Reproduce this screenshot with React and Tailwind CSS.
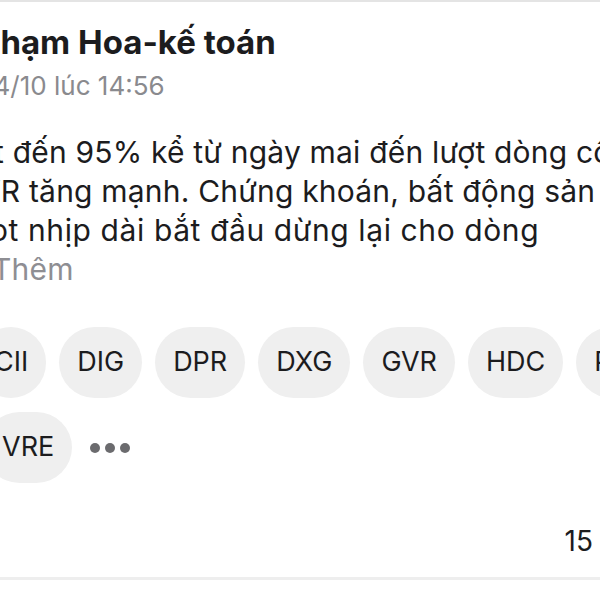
const tickers = ["CII", "DIG", "DPR", "DXG", "GVR", "HDC", "PDR"];

function Chip({ label }) {
  return (
    <div className="h-[71px] px-[18px] rounded-full bg-[#efefef] flex items-center justify-center text-[27px] text-[#1c1c1e] whitespace-nowrap shrink-0">
      {label}
    </div>
  );
}

export default function App() {
  return (
    <div
      className="w-[600px] h-[600px] overflow-hidden bg-white relative"
      style={{ fontFamily: "Inter, 'Noto Sans', sans-serif" }}
    >
      <div className="border-t-2 border-[#e4e4e4]" />
      <div className="mt-[21px] -ml-[21px] text-[33px] leading-[38px] font-bold text-[#1c1c1e] whitespace-nowrap">
        Phạm Hoa-kế toán
      </div>
      <div className="mt-[10px] -ml-[17px] text-[26px] leading-[30px] text-[#8a8a8e] whitespace-nowrap">
        14/10 lúc 14:56
      </div>

      <div className="mt-[32px] text-[30px] leading-[39px] tracking-[0.2px] text-[#1c1c1e] whitespace-nowrap">
        <div className="-ml-[6px]">t đến 95% kể từ ngày mai đến lượt dòng cổ</div>
        <div className="-ml-[42px]">GVR tăng mạnh. Chứng khoán, bất động sản</div>
        <div className="-ml-[10px] tracking-[0.6px]">ot nhịp dài bắt đầu dừng lại cho dòng</div>
        <div className="-ml-[8px] text-[#8e8e93]">Thêm</div>
      </div>

      <div className="mt-[38px] -ml-[24px] flex gap-[13px]">
        {tickers.map((t) => (
          <Chip key={t} label={t} />
        ))}
      </div>
      <div className="mt-[14px] -ml-[16px] flex items-center gap-[18px]">
        <Chip label="VRE" />
        <div className="flex gap-[5px]">
          <span className="w-[10px] h-[10px] rounded-full bg-[#6b6b6e]" />
          <span className="w-[10px] h-[10px] rounded-full bg-[#6b6b6e]" />
          <span className="w-[10px] h-[10px] rounded-full bg-[#6b6b6e]" />
        </div>
      </div>

      <div className="mt-[42px] flex justify-end pr-[7px] text-[28px] leading-[32px] text-[#1c1c1e]">
        15
      </div>
      <div className="mt-[20px] border-t-[3px] border-[#eeeeee]" />
    </div>
  );
}
